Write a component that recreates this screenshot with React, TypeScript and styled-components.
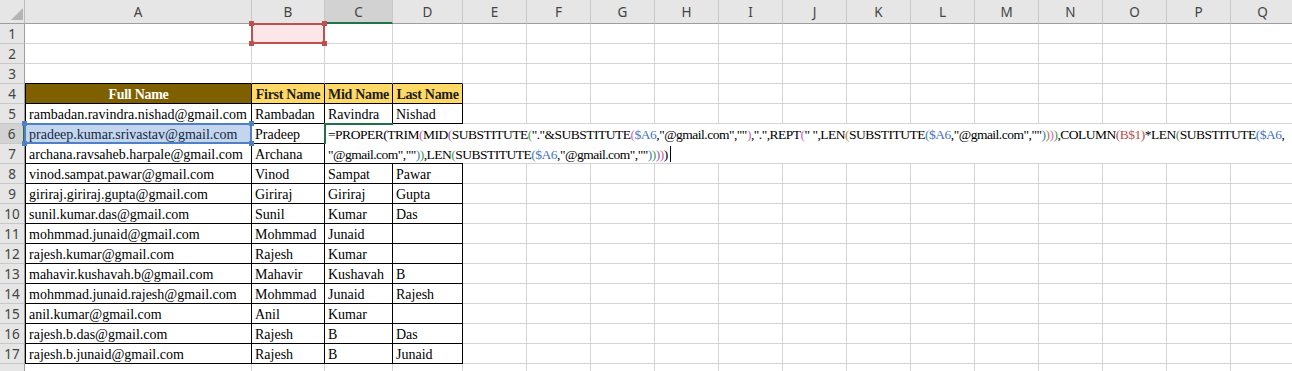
import * as React from "react";
import styled, { createGlobalStyle } from "styled-components";

const GlobalStyle = createGlobalStyle`
  html, body {
    margin: 0;
    padding: 0;
    background: #ffffff;
    overflow: hidden;
  }
`;

const GREEN = "#217346";
const GRID = "#d4d4d4";

const COLUMNS: [string, number][] = [
  ["A", 227],
  ["B", 73],
  ["C", 68],
  ["D", 70],
  ...["E", "F", "G", "H", "I", "J", "K", "L", "M", "N", "O", "P", "Q"].map(
    (l) => [l, 64] as [string, number]
  ),
];
const ROW_COUNT = 18;

const TABLE: string[][] = [
  ["Full Name", "First Name", "Mid Name", "Last Name"],
  ["rambadan.ravindra.nishad@gmail.com", "Rambadan", "Ravindra", "Nishad"],
  ["pradeep.kumar.srivastav@gmail.com", "Pradeep", "", ""],
  ["archana.ravsaheb.harpale@gmail.com", "Archana", "", ""],
  ["vinod.sampat.pawar@gmail.com", "Vinod", "Sampat", "Pawar"],
  ["giriraj.giriraj.gupta@gmail.com", "Giriraj", "Giriraj", "Gupta"],
  ["sunil.kumar.das@gmail.com", "Sunil", "Kumar", "Das"],
  ["mohmmad.junaid@gmail.com", "Mohmmad", "Junaid", ""],
  ["rajesh.kumar@gmail.com", "Rajesh", "Kumar", ""],
  ["mahavir.kushavah.b@gmail.com", "Mahavir", "Kushavah", "B"],
  ["mohmmad.junaid.rajesh@gmail.com", "Mohmmad", "Junaid", "Rajesh"],
  ["anil.kumar@gmail.com", "Anil", "Kumar", ""],
  ["rajesh.b.das@gmail.com", "Rajesh", "B", "Das"],
  ["rajesh.b.junaid@gmail.com", "Rajesh", "B", "Junaid"],
];
const TABLE_TOP = 4;

// paren colours as Excel paints them
const K = "#000000";
const PK = "#dc5a9c";
const PU = "#8b5cb8";
const GR = "#4e9a4e";
const LV = "#c06cc8";
const OR = "#c8782f";
const TL = "#3c84c0";
const BL = "#4472c4";
const RD = "#c0504d";

const LINE1: [string, string][] = [
  ["=PROPER", K], ["(", K], ["TRIM", K], ["(", PK], ["MID", K], ["(", PU],
  ["SUBSTITUTE", K], ["(", GR], ['"."&SUBSTITUTE', K], ["(", LV], ["$A6", BL],
  [',"@gmail.com",""', K], [")", LV], [',".",REPT', K], ["(", LV],
  ['" ",LEN', K], ["(", OR], ["SUBSTITUTE", K], ["(", TL], ["$A6", BL],
  [',"@gmail.com",""', K], [")", TL], [")", OR], [")", LV], [")", GR],
  [",COLUMN", K], ["(", RD], ["B$1", RD], [")", RD], ["*LEN", K], ["(", GR],
  ["SUBSTITUTE", K], ["(", TL], ["$A6", BL], [",", K],
];
const LINE2: [string, string][] = [
  ['"@gmail.com",""', K], [")", TL], [")", GR], [",LEN", K], ["(", GR],
  ["SUBSTITUTE", K], ["(", TL], ["$A6", BL], [',"@gmail.com",""', K],
  [")", TL], [")", GR], [")", PU], [")", PK], [")", K],
];

const Sheet = styled.div`
  display: grid;
  grid-template-columns: 25px ${COLUMNS.map(([, w]) => `${w}px`).join(" ")};
  grid-template-rows: 24px repeat(${ROW_COUNT}, 20px);
  width: 1292px;
  height: 371px;
  overflow: hidden;
  font-family: "Liberation Serif", "DejaVu Serif", serif;
  font-size: 14px;
  color: #000;
`;

const Corner = styled.div`
  grid-row: 1;
  grid-column: 1;
  background: #e6e6e6;
  border-right: 1px solid #bcbcbc;
  border-bottom: 1px solid #9e9e9e;
  box-sizing: border-box;
  display: flex;
  align-items: flex-end;
  justify-content: flex-end;
  padding: 0 1px 3px 0;
`;

const ColHeader = styled.div<{ $c: number; $active?: boolean }>`
  grid-row: 1;
  grid-column: ${(p) => p.$c + 2};
  box-sizing: border-box;
  background: ${(p) => (p.$active ? "#d2d2d2" : "#e6e6e6")};
  border-right: 1px solid #c8c8c8;
  border-bottom: ${(p) => (p.$active ? `2px solid ${GREEN}` : "1px solid #9e9e9e")};
  display: flex;
  align-items: center;
  justify-content: center;
  padding-top: ${(p) => (p.$active ? 1 : 0)}px;
  font-family: "Noto Sans", "Open Sans", sans-serif;
  font-size: 13.5px;
  color: #444;
`;

const RowHeader = styled.div<{ $r: number; $active?: boolean }>`
  grid-row: ${(p) => p.$r + 1};
  grid-column: 1;
  box-sizing: border-box;
  background: ${(p) => (p.$active ? "#d2d2d2" : "#e6e6e6")};
  border-bottom: 1px solid #c8c8c8;
  border-right: ${(p) => (p.$active ? `2px solid ${GREEN}` : "1px solid #9e9e9e")};
  display: flex;
  align-items: center;
  justify-content: center;
  font-family: "Noto Sans", "Open Sans", sans-serif;
  font-size: 13.5px;
  color: #444;
`;

const Cell = styled.div<{
  $r: number;
  $c: number;
  $right: string;
  $bottom: string;
  $left?: string;
  $bg?: string;
  $head?: boolean;
  $fg?: string;
}>`
  grid-row: ${(p) => p.$r + 1};
  grid-column: ${(p) => p.$c + 2};
  box-sizing: border-box;
  border-right: 1px solid ${(p) => p.$right};
  border-bottom: 1px solid ${(p) => p.$bottom};
  border-left: ${(p) => (p.$left ? `1px solid ${p.$left}` : "none")};
  background: ${(p) => p.$bg || "transparent"};
  color: ${(p) => p.$fg || "#000"};
  font-weight: ${(p) => (p.$head ? 700 : 400)};
  letter-spacing: ${(p) => (p.$head ? "-0.3px" : "0")};
  text-align: ${(p) => (p.$head ? "center" : "left")};
  padding: 1px 1px 0 ${(p) => (p.$head ? 1 : 3)}px;
  line-height: 19px;
  white-space: nowrap;
  overflow: hidden;
`;

const RefBox = styled.div<{ $r: number; $c: number; $line: string; $fill: string }>`
  grid-row: ${(p) => p.$r + 1};
  grid-column: ${(p) => p.$c + 2};
  position: relative;
  z-index: 4;
  margin: -1px 0 0 -1px;
  border: 2px solid ${(p) => p.$line};
  background: ${(p) => p.$fill};
`;

const Handle = styled.span<{ $line: string; $x: "left" | "right"; $y: "top" | "bottom" }>`
  position: absolute;
  ${(p) => p.$x}: -4px;
  ${(p) => p.$y}: -4px;
  width: 5px;
  height: 5px;
  background: ${(p) => p.$line};
`;

const ActiveCell = styled.div<{ $r: number; $c: number }>`
  grid-row: ${(p) => p.$r + 1};
  grid-column: ${(p) => p.$c + 2};
  z-index: 6;
  margin: -1px 0 0 -1px;
  border-top: 2px solid ${GREEN};
  border-left: 2px solid ${GREEN};
  pointer-events: none;
`;

const EditBox = styled.div<{ $r: number; $c: number }>`
  grid-row: ${(p) => p.$r + 1} / span 2;
  grid-column: ${(p) => p.$c + 2} / -1;
  z-index: 5;
  margin-bottom: 1px;
  background: #ffffff;
  padding: 1px 0 0 3px;
  font-size: 13.5px;
  letter-spacing: -0.5px;
  line-height: 20px;
  white-space: nowrap;
  overflow: hidden;
`;

const Tok = styled.span<{ $color: string }>`
  color: ${(p) => p.$color};
`;

const Caret = styled.span`
  display: inline-block;
  width: 1px;
  height: 16px;
  margin-left: 2px;
  background: #000;
  vertical-align: -3px;
`;

const SelectAll = () => (
  <svg width="12" height="12" viewBox="0 0 12 12">
    <polygon points="12,0 12,12 0,12" fill="#b4b4b4" />
  </svg>
);

const RefHighlight = (props: { r: number; c: number; line: string; fill: string }) => (
  <RefBox $r={props.r} $c={props.c} $line={props.line} $fill={props.fill}>
    <Handle $line={props.line} $x="left" $y="top" />
    <Handle $line={props.line} $x="right" $y="top" />
    <Handle $line={props.line} $x="left" $y="bottom" />
    <Handle $line={props.line} $x="right" $y="bottom" />
  </RefBox>
);

const inTable = (r: number, c: number) =>
  r >= TABLE_TOP && r < TABLE_TOP + TABLE.length && c < 4;

const renderCell = (r: number, c: number) => {
  const table = inTable(r, c);
  const aboveTable = r === TABLE_TOP - 1 && c < 4;
  const text = table ? TABLE[r - TABLE_TOP][c] : "";
  const head = r === TABLE_TOP && c < 4;
  return (
    <Cell
      key={`${r}-${c}`}
      $r={r}
      $c={c}
      $right={table ? "#000" : GRID}
      $bottom={table || aboveTable ? "#000" : GRID}
      $left={table && c === 0 ? "#000" : undefined}
      $bg={head ? (c === 0 ? "#7f6000" : "#ffd966") : undefined}
      $fg={head ? (c === 0 ? "#ffffff" : "#1c1c1c") : undefined}
      $head={head}
    >
      {text}
    </Cell>
  );
};

const App = () => {
  const rows = Array.from({ length: ROW_COUNT }, (_, i) => i + 1);
  return (
    <>
      <GlobalStyle />
      <Sheet>
        <Corner>
          <SelectAll />
        </Corner>
        {COLUMNS.map(([label], c) => (
          <ColHeader key={label} $c={c} $active={label === "C"}>
            {label}
          </ColHeader>
        ))}
        {rows.map((r) => (
          <RowHeader key={r} $r={r} $active={r === 6}>
            {r < ROW_COUNT ? r : ""}
          </RowHeader>
        ))}
        {rows.map((r) => COLUMNS.map((_, c) => renderCell(r, c)))}
        <RefHighlight r={1} c={1} line="#c0504d" fill="rgba(230, 60, 80, 0.13)" />
        <RefHighlight r={6} c={0} line="#4f7fc4" fill="rgba(60, 120, 200, 0.3)" />
        <EditBox $r={6} $c={2}>
          {LINE1.map(([t, col], i) => (
            <Tok key={i} $color={col}>
              {t}
            </Tok>
          ))}
          <br />
          {LINE2.map(([t, col], i) => (
            <Tok key={i} $color={col}>
              {t}
            </Tok>
          ))}
          <Caret />
        </EditBox>
        <ActiveCell $r={6} $c={2} />
      </Sheet>
    </>
  );
};

export default App;
